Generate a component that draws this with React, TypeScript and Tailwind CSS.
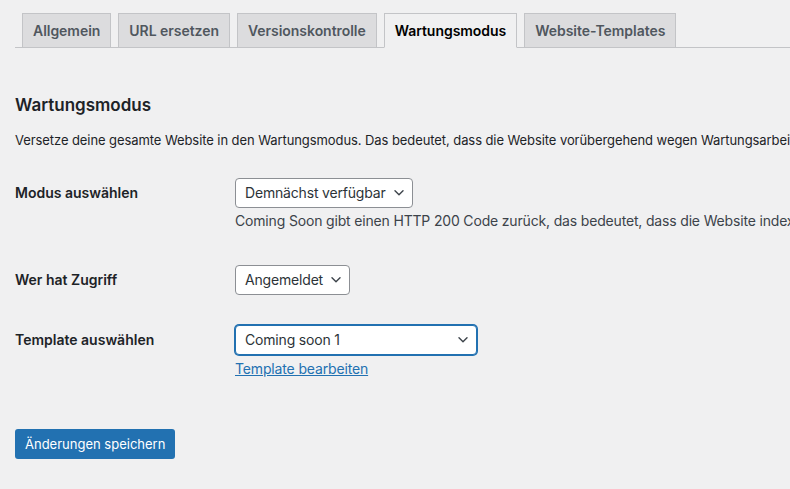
import React from 'react';

const tabs = ['Allgemein', 'URL ersetzen', 'Versionskontrolle', 'Wartungsmodus', 'Website-Templates'];

const Chevron = () => (
  <svg width="10" height="6" viewBox="0 0 10 6" fill="none" className="shrink-0">
    <polyline points="1,0.8 5,4.8 9,0.8" stroke="#3c434a" strokeWidth="1.4" strokeLinecap="round" strokeLinejoin="round" />
  </svg>
);

const Select = ({ value, focused, width }: { value: string; focused?: boolean; width?: string }) => (
  <div
    className={
      'h-[30px] flex items-center justify-between gap-2 pl-[9px] pr-[8px] rounded-[4px] bg-white text-[14px] tracking-[-0.18px] text-[#2c3338] ' +
      (focused ? 'border border-[#2271b1] shadow-[0_0_0_1px_#2271b1] ' : 'border border-[#8c8f94] ') +
      (width ?? 'w-fit')
    }
  >
    <span className="whitespace-nowrap">{value}</span>
    <Chevron />
  </div>
);

const Row = ({ label, className, children }: { label: string; className: string; children: React.ReactNode }) => (
  <div className={'flex ' + className}>
    <div className="w-[220px] shrink-0 text-[14px] leading-[30px] font-semibold text-[#1d2327]">{label}</div>
    <div className="flex flex-col min-w-0">{children}</div>
  </div>
);

export default function App() {
  return (
    <div
      className="w-full h-screen overflow-hidden bg-[#f0f0f1] pl-[15px] pt-[13px] text-[#1d2327]"
      style={{ fontFamily: 'Inter, "Noto Sans", sans-serif' }}
    >
      {/* Tabs */}
      <nav className="flex gap-[7px] pl-[7px] border-b border-[#c3c4c7]">
        {tabs.map(t => {
          const active = t === 'Wartungsmodus';
          return (
            <div
              key={t}
              className={
                'h-[35px] -mb-px px-[10px] border text-[14px] leading-[33px] font-semibold tracking-[-0.04px] whitespace-nowrap ' +
                (active
                  ? 'bg-[#f0f0f1] border-[#c3c4c7] border-b-[#f0f0f1] text-black'
                  : 'bg-[#dcdcde] border-[#c3c4c7] text-[#50575e]')
              }
            >
              {t}
            </div>
          );
        })}
      </nav>

      <h2 className="mt-[46px] text-[17px] leading-[22px] font-semibold text-[#1d2327]">Wartungsmodus</h2>
      <p className="mt-[15px] text-[13px] leading-[19.5px] tracking-[-0.08px] whitespace-nowrap text-[#1d2327]">
        Versetze deine gesamte Website in den Wartungsmodus. Das bedeutet, dass die Website vorübergehend wegen Wartungsarbeiten nicht erreichbar ist.
      </p>

      <Row label="Modus auswählen" className="mt-[27px]">
        <Select value="Demnächst verfügbar" />
        <p className="mt-[3px] text-[14px] leading-[20px] tracking-[-0.17px] whitespace-nowrap text-[#3c434a]">
          Coming Soon gibt einen HTTP 200 Code zurück, das bedeutet, dass die Website indexiert werden kann.
        </p>
      </Row>

      <Row label="Wer hat Zugriff" className="mt-[34px]">
        <Select value="Angemeldet" />
      </Row>

      <Row label="Template auswählen" className="mt-[30px]">
        <Select value="Coming soon 1" focused width="w-[242px]" />
        <a href="#" className="mt-[4px] text-[14px] leading-[20px] tracking-[-0.15px] text-[#2271b1] underline w-fit">
          Template bearbeiten
        </a>
      </Row>

      <button className="mt-[50px] h-[30px] px-[10px] rounded-[3px] bg-[#2271b1] text-white text-[13px] leading-[28px]">
        Änderungen speichern
      </button>
    </div>
  );
}
